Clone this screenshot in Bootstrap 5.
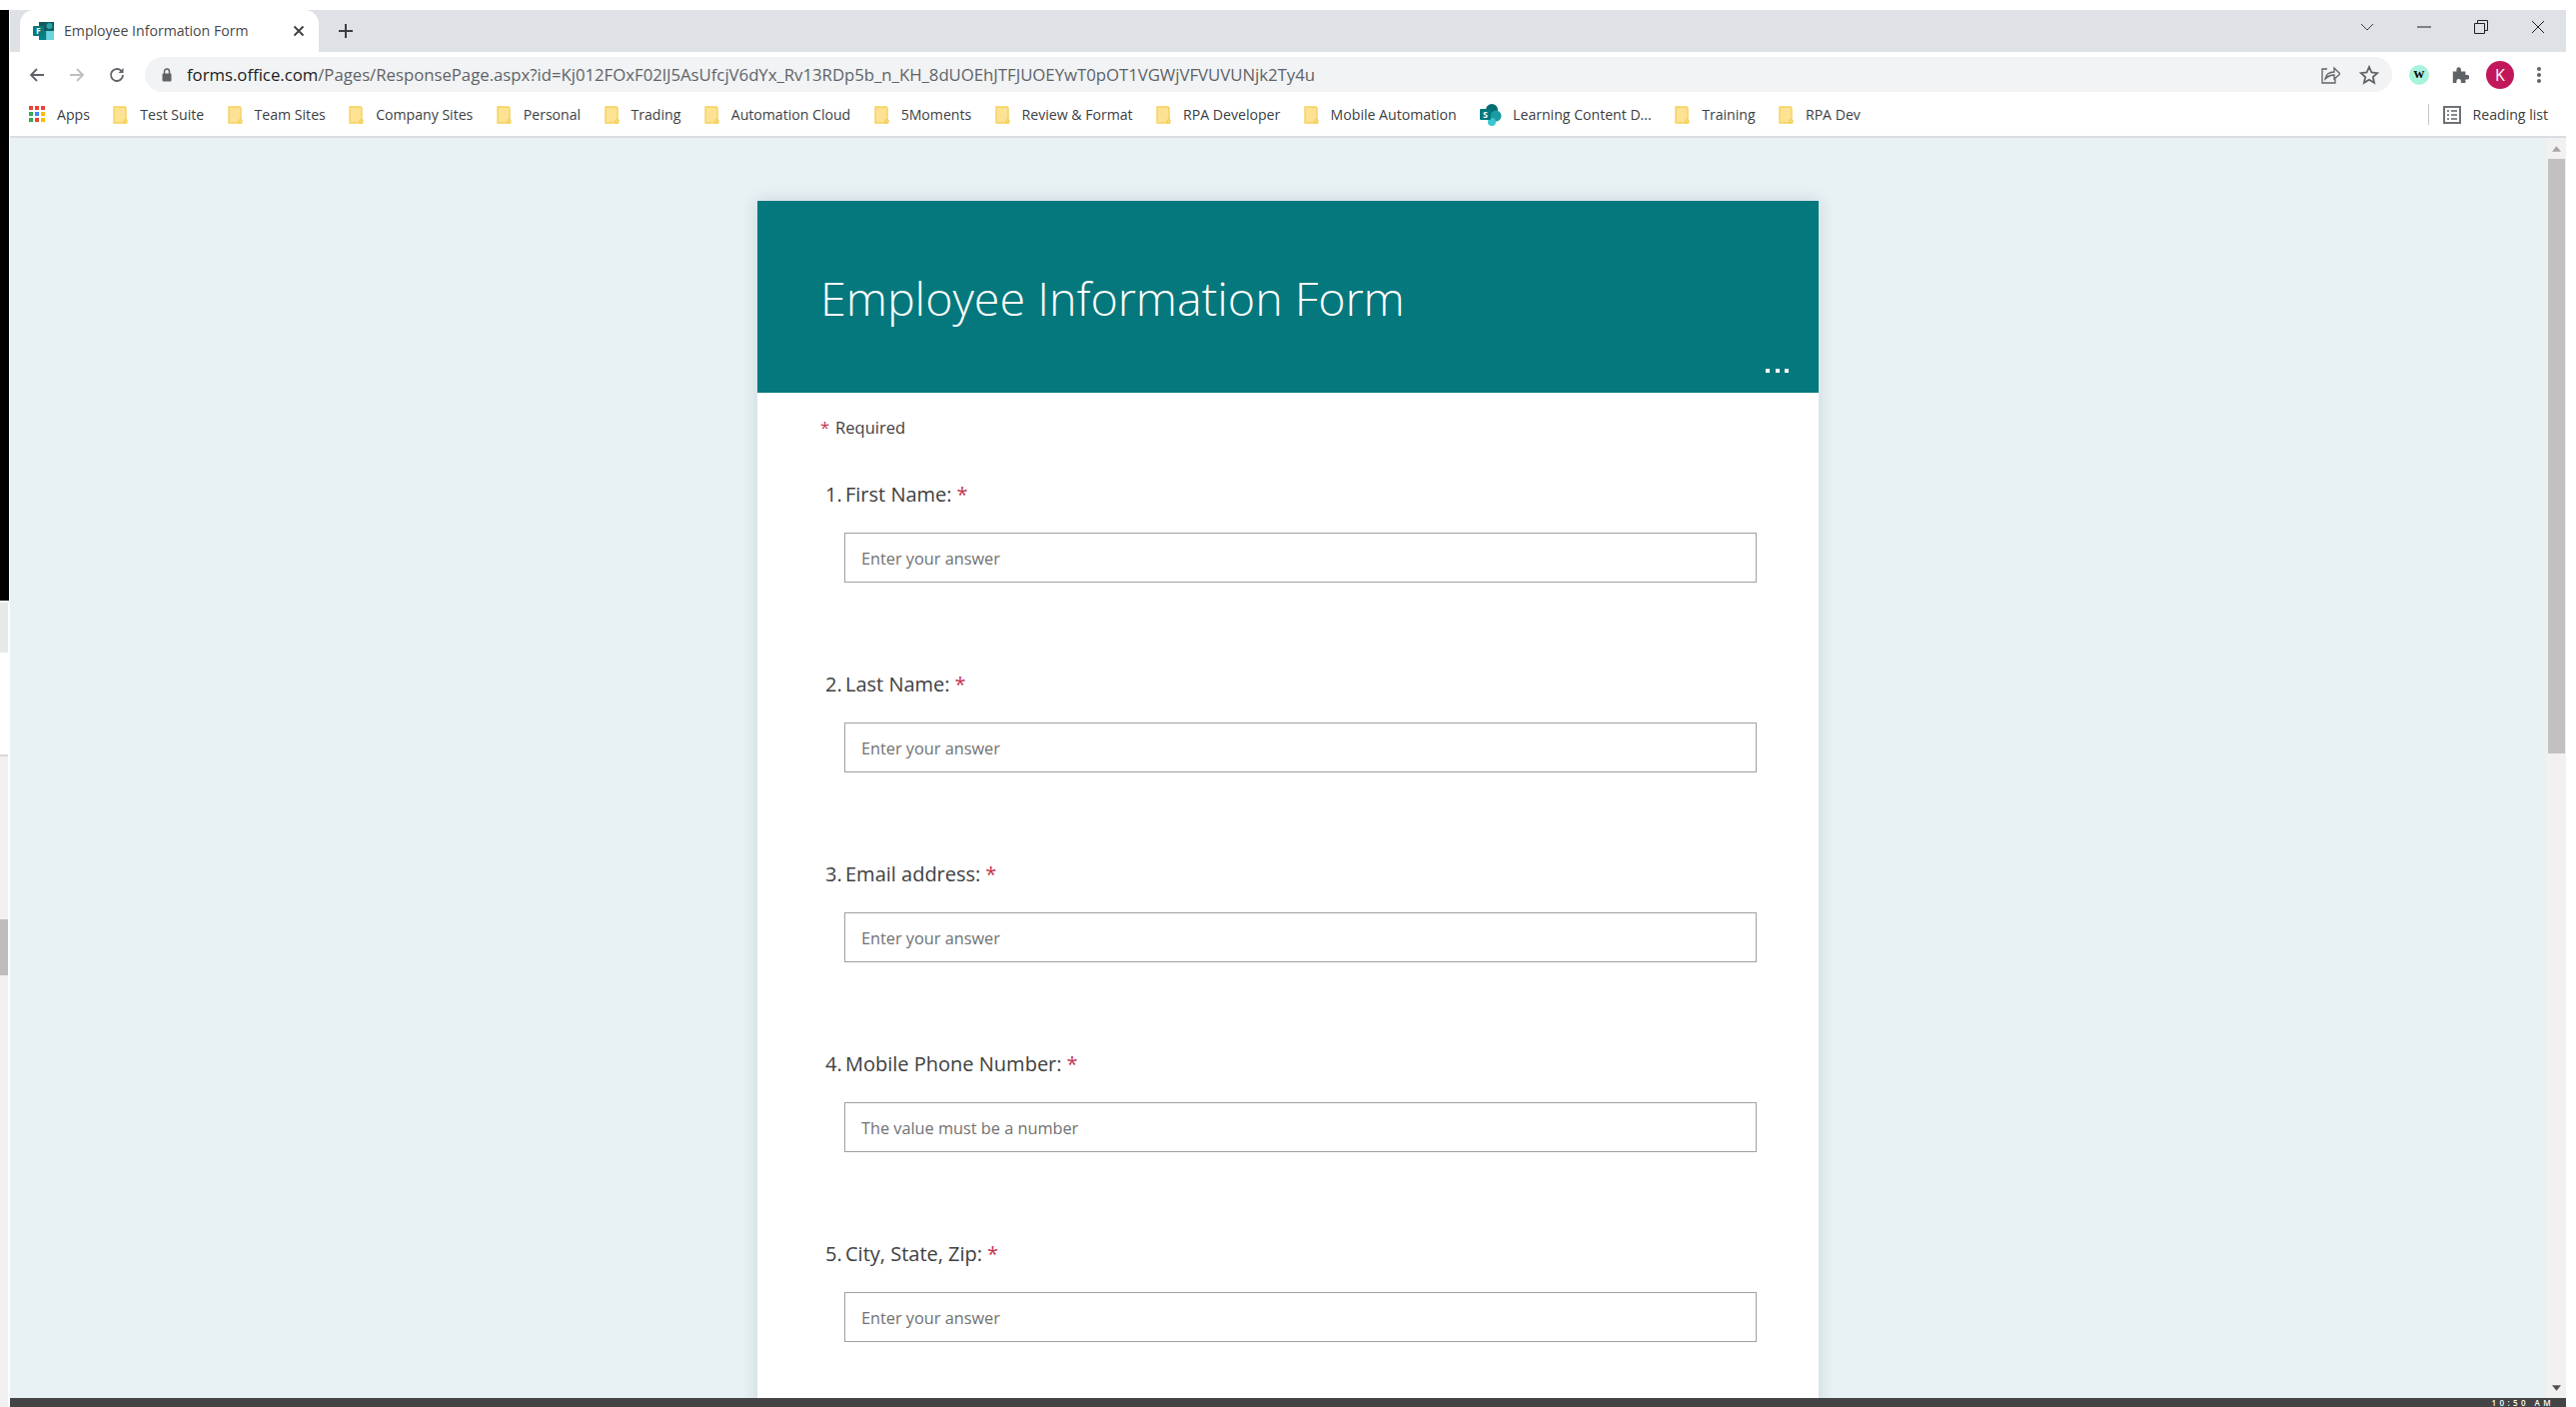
<!DOCTYPE html>
<html lang="en">
<head>
<meta charset="utf-8">
<title>Employee Information Form</title>
<link href="https://cdn.jsdelivr.net/npm/bootstrap@5.3.0/dist/css/bootstrap.min.css" rel="stylesheet">
<style>
html,body{height:100%;overflow:hidden;background:#fff}
body{font-family:"Open Sans","Noto Sans",sans-serif;color:#3c4043}
.shell{height:1408px;width:2578px;overflow:hidden}
.edge-left{width:10px;padding-top:10px;flex:none}
.edge-black{width:9px;height:591px;background:#000;flex:none}
.edge-pale{width:8px;height:50px;margin-top:2px;background:#e6e8ea;flex:none}
.edge-track{width:8px;margin-top:102px;flex:1;background:#f0f0f0;border-top:2px solid #d8d8d8;padding-top:163px}
.edge-thumb{width:8px;height:56px;background:#bdbdbd}
.browser{width:2558px;flex:none;padding-top:10px}
.tabstrip{height:42px;background:#dee1e6;flex:none;padding-left:10px}
.tabitem{width:299px;height:42px;background:#fff;border-radius:14px 14px 0 0;padding-left:13px;padding-bottom:1px;font-size:14.1px;color:#45494d;flex:none}
.tabtitle{margin-left:10px;width:229px;white-space:nowrap;flex:none}
.tabplus{margin-left:19px}
.winctl{margin-left:auto;padding-bottom:8px}
.winbtn{width:57px}
.toolbar{height:40px;flex:none;background:#fff;padding-left:7px}
.navbtn{width:40px;height:35px;flex:none;margin-top:5px}
.omni{width:2249px;height:35px;background:#f1f3f4;border-radius:18px;margin:5px 0 0 8px;padding:0 13px 0 16px;font-size:16.73px;white-space:nowrap;flex:none}
.omni-lock{margin-right:14px;flex:none}
.omni-host{color:#202124}
.omni-path{color:#5f6368}
.omni-end{margin-left:auto;gap:19px}
.tool-r{margin-top:5px;height:35px}
.ext-w{width:20px;height:20px;margin-left:17px;background:#a8f3dc;color:#111;font:700 15px/1 "Liberation Serif",serif;padding-bottom:3px}
.tool-puzzle{margin-left:22px}
.avatar-k{width:28px;height:28px;margin-left:17px;background:#c2185b;color:#fff;font-size:16px}
.tool-dots{margin-left:22px}
.bookbar{height:46px;flex:none;background:#fff;border-bottom:2px solid #dadce0;padding-left:19px;padding-top:2px;font-size:14.1px;white-space:nowrap;color:#3c4043}
.bookitem{margin-right:23.4px}
.bookitem svg{margin-right:12px}
.bookapps svg{margin-right:11px}
.booksp svg{margin-right:11px}
.bookend{margin-left:auto;margin-right:18px}
.bookdiv{width:1px;height:21px;background:#c6c8cb;margin-right:14px}
.readicon{margin-right:12px}
.pagearea{flex:1;min-height:0;background:#e8f1f4;overflow:hidden}
.pagescroll{flex:1;min-width:0;overflow:hidden;padding-top:63px}
.formcard{width:1062px;margin-left:748px;background:#fff;min-height:1300px;box-shadow:0 0 16px rgba(0,60,80,.14)}
.formhead{height:192px;background:#05787d;color:#fff;padding:66px 0 0 63px}
.formtitle{font-size:46.6px;font-weight:300;line-height:62px;margin:0}
.formdots{right:30px;bottom:20px;width:23px}
.dotmark{width:4px;height:4px;background:#fff}
.formbody{padding:23px 62px 0 63px}
.reqline{font-size:16.5px;line-height:24px;color:#404040}
.reqstar{color:#c4314b;margin-right:6px}
.qblock{height:190px}
.qfirst{margin-top:41px}
.qlabel{font-size:20px;line-height:28px;color:#404040;padding-left:5px;margin-bottom:0}
.qnum{width:20px;flex:none}
.qstar{color:#c4314b;margin-left:5px}
.qinput{display:block;width:913px;height:50px;margin:24px 0 0 24px;padding:1px 16px 0;border:1px solid #a0a0a0;border-radius:0;font-size:16.3px;color:#404040;background:#fff;outline:0}
.qinput::placeholder{color:#717171;opacity:1}
.vscroll{width:20px;flex:none;background:#f1f1f1}
.vcap{height:21px}
.vthumb{height:595px;background:#c1c1c1;margin:0 1px 0 2px}
.vbot{margin-top:auto;height:21px}
.bottombar{height:9px;flex:none;background:#444;overflow:hidden;color:#fff;font-size:8px;line-height:9px}
.clock{margin-left:auto;margin-right:12px;font-weight:600;letter-spacing:3.4px;white-space:nowrap}
</style>
</head>
<body>
<div class="shell d-flex">
  <svg width="0" height="0" class="position-absolute"><defs><g id="fold"><path d="M1 1h11l1 1v15H1z" fill="#fde293" stroke="#f5d15e" stroke-width="1.400"/><path d="M11 17v-3h3v3z" fill="#fde293" stroke="#f0c93f"/></g></defs></svg>
  <div class="edge-left d-flex flex-column">
    <div class="edge-black"></div>
    <div class="edge-pale"></div>
    <div class="edge-track"><div class="edge-thumb"></div></div>
  </div>
  <div class="browser d-flex flex-column">
    <div class="tabstrip d-flex align-items-end">
      <div class="tabitem d-flex align-items-center">
        <svg width="21" height="20" viewBox="0 0 21 20"><rect x="6" y="1" width="15" height="9" fill="#0e5c62"/><rect x="6" y="10" width="7.500" height="9" fill="#038387"/><rect x="13.500" y="10" width="7.500" height="9" fill="#37c6d0" opacity=".75"/><circle cx="16.500" cy="5" r="3" fill="#2ba5aa"/><rect y="5" width="11" height="10" rx="1" fill="#077a7e"/><text x="3" y="13" font-size="8.500" font-weight="700" fill="#fff" font-family="Open Sans">F</text></svg>
        <span class="tabtitle">Employee Information Form</span>
        <svg width="12" height="12" viewBox="0 0 12 12"><path d="M1.500 1.500l9 9M10.500 1.500l-9 9" stroke="#3c4043" stroke-width="1.800"/></svg>
      </div>
      <svg class="tabplus align-self-center" width="16" height="16" viewBox="0 0 16 16"><path d="M8 1v14M1 8h14" stroke="#3c4043" stroke-width="2"/></svg>
      <div class="winctl d-flex align-items-center h-100">
        <div class="winbtn d-flex justify-content-center"><svg width="14" height="8" viewBox="0 0 14 8"><path d="M1 1l6 6 6-6" fill="none" stroke="#3c4043"/></svg></div>
        <div class="winbtn d-flex justify-content-center"><svg width="14" height="2" viewBox="0 0 14 2"><path d="M0 1h14" stroke="#202124"/></svg></div>
        <div class="winbtn d-flex justify-content-center"><svg width="14" height="14" viewBox="0 0 14 14"><path d="M.5 3.500h10v10H.5zM3.500 3.500v-3h10v10h-3" fill="none" stroke="#202124"/></svg></div>
        <div class="winbtn d-flex justify-content-center"><svg width="14" height="14" viewBox="0 0 14 14"><path d="M1 1l12 12M13 1L1 13" stroke="#202124"/></svg></div>
      </div>
    </div>
    <div class="toolbar d-flex">
      <div class="navbtn d-flex align-items-center justify-content-center"><svg width="16" height="16" viewBox="0 0 16 16"><path d="M15 8H2M8 2L2 8l6 6" fill="none" stroke="#5f6368" stroke-width="1.800"/></svg></div>
      <div class="navbtn d-flex align-items-center justify-content-center"><svg width="16" height="16" viewBox="0 0 16 16"><path d="M1 8h13M8 2l6 6-6 6" fill="none" stroke="#bcbfc3" stroke-width="1.800"/></svg></div>
      <div class="navbtn d-flex align-items-center justify-content-center"><svg width="16" height="16" viewBox="0 0 16 16"><path d="M14 8a6 6 0 1 1-1.800-4.300" fill="none" stroke="#5f6368" stroke-width="1.800"/><path d="M14.500 1v5h-5z" fill="#5f6368"/></svg></div>
      <div class="omni d-flex align-items-center">
        <svg class="omni-lock" width="12" height="14" viewBox="0 0 12 14"><rect x="1.500" y="5.500" width="9" height="8" rx="1" fill="#5f6368"/><path d="M3.500 6V3.500a2.500 2.500 0 0 1 5 0V6" fill="none" stroke="#5f6368" stroke-width="1.500"/></svg>
        <span><span class="omni-host">forms.office.com</span><span class="omni-path">/Pages/ResponsePage.aspx?id=Kj012FOxF02lJ5AsUfcjV6dYx_Rv13RDp5b_n_KH_8dUOEhJTFJUOEYwT0pOT1VGWjVFVUVUNjk2Ty4u</span></span>
        <div class="omni-end d-flex align-items-center">
          <svg width="20" height="20" viewBox="0 0 20 20"><path d="M7 4H2v14h13v-4" fill="none" stroke="#5f6368" stroke-width="1.300"/><path d="M5 14c1-5 5-7 9-7V3l6 6-6 5v-4c-4 0-6 1-9 4z" fill="none" stroke="#5f6368" stroke-width="1.300"/></svg>
          <svg width="20" height="20" viewBox="0 0 20 20"><path d="M10 2l2.400 5.500 5.800.6-4.400 3.900 1.300 5.800-5.100-3-5.100 3L6.200 12 1.800 8.100l5.800-.6z" fill="none" stroke="#5f6368" stroke-width="1.800"/></svg>
        </div>
      </div>
      <div class="tool-r d-flex align-items-center">
        <div class="ext-w d-flex align-items-center justify-content-center rounded-circle">w</div>
        <svg class="tool-puzzle" width="18" height="18" viewBox="0 0 20 20"><path d="M2 6h4V4a2.500 2.500 0 0 1 5 0v2h5v4h2a2.500 2.500 0 0 1 0 5h-2v4h-5v-2a2.500 2.500 0 0 0-5 0v2H2z" fill="#5f6368"/></svg>
        <div class="avatar-k d-flex align-items-center justify-content-center rounded-circle">K</div>
        <svg class="tool-dots" width="6" height="18" viewBox="0 0 6 18"><circle cx="3" cy="3" r="2" fill="#5f6368"/><circle cx="3" cy="9" r="2" fill="#5f6368"/><circle cx="3" cy="15" r="2" fill="#5f6368"/></svg>
      </div>
    </div>
    <div class="bookbar d-flex align-items-center">
      <div class="bookitem bookapps d-flex align-items-center"><svg width="17" height="17" viewBox="0 0 17 17"><g fill="#ea4335"><rect width="4" height="4"/><rect x="6" width="4" height="4"/><rect x="12" width="4" height="4"/></g><g fill="#fbbc04"><rect y="6" width="4" height="4" fill="#34a853"/><rect x="6" y="6" width="4" height="4" fill="#4285f4"/><rect x="12" y="6" width="4" height="4"/></g><g fill="#34a853"><rect y="12" width="4" height="4"/><rect x="6" y="12" width="4" height="4" fill="#ea4335"/><rect x="12" y="12" width="4" height="4" fill="#fbbc04"/></g></svg>Apps</div>
      <div class="bookitem d-flex align-items-center"><svg width="15" height="18" viewBox="0 0 15 18"><use href="#fold"/></svg>Test Suite</div>
      <div class="bookitem d-flex align-items-center"><svg width="15" height="18" viewBox="0 0 15 18"><use href="#fold"/></svg>Team Sites</div>
      <div class="bookitem d-flex align-items-center"><svg width="15" height="18" viewBox="0 0 15 18"><use href="#fold"/></svg>Company Sites</div>
      <div class="bookitem d-flex align-items-center"><svg width="15" height="18" viewBox="0 0 15 18"><use href="#fold"/></svg>Personal</div>
      <div class="bookitem d-flex align-items-center"><svg width="15" height="18" viewBox="0 0 15 18"><use href="#fold"/></svg>Trading</div>
      <div class="bookitem d-flex align-items-center"><svg width="15" height="18" viewBox="0 0 15 18"><use href="#fold"/></svg>Automation Cloud</div>
      <div class="bookitem d-flex align-items-center"><svg width="15" height="18" viewBox="0 0 15 18"><use href="#fold"/></svg>5Moments</div>
      <div class="bookitem d-flex align-items-center"><svg width="15" height="18" viewBox="0 0 15 18"><use href="#fold"/></svg>Review &amp; Format</div>
      <div class="bookitem d-flex align-items-center"><svg width="15" height="18" viewBox="0 0 15 18"><use href="#fold"/></svg>RPA Developer</div>
      <div class="bookitem d-flex align-items-center"><svg width="15" height="18" viewBox="0 0 15 18"><use href="#fold"/></svg>Mobile Automation</div>
      <div class="bookitem booksp d-flex align-items-center"><svg width="22" height="22" viewBox="0 0 22 22"><circle cx="12" cy="6" r="6" fill="#036c70"/><circle cx="16" cy="12" r="5.500" fill="#1a9ba1"/><circle cx="12" cy="18" r="4" fill="#37c6d0"/><rect y="5" width="11" height="11" rx="1" fill="#03787c"/><text x="3" y="14" font-size="9" font-weight="700" fill="#fff" font-family="Open Sans">S</text></svg>Learning Content D...</div>
      <div class="bookitem d-flex align-items-center"><svg width="15" height="18" viewBox="0 0 15 18"><use href="#fold"/></svg>Training</div>
      <div class="bookitem d-flex align-items-center"><svg width="15" height="18" viewBox="0 0 15 18"><use href="#fold"/></svg>RPA Dev</div>
      <div class="bookend d-flex align-items-center"><div class="bookdiv"></div><svg class="readicon" width="18" height="18" viewBox="0 0 18 18"><rect x="1" y="1" width="16" height="16" fill="none" stroke="#5f6368" stroke-width="1.800"/><path d="M4 5h2M4 9h2M4 13h2M8 5h6M8 9h6M8 13h6" stroke="#5f6368" stroke-width="1.400"/></svg>Reading list</div>
    </div>
    <div class="pagearea d-flex">
      <div class="pagescroll">
        <div class="formcard">
          <div class="formhead position-relative">
            <h1 class="formtitle">Employee Information Form</h1>
            <div class="formdots position-absolute d-flex justify-content-between"><span class="dotmark"></span><span class="dotmark"></span><span class="dotmark"></span></div>
          </div>
          <div class="formbody">
            <div class="reqline"><span class="reqstar">*</span>Required</div>
            <div class="qblock qfirst"><div class="qlabel d-flex"><span class="qnum">1.</span><span>First Name:<span class="qstar">*</span></span></div><input class="qinput" type="text" placeholder="Enter your answer"></div>
            <div class="qblock"><div class="qlabel d-flex"><span class="qnum">2.</span><span>Last Name:<span class="qstar">*</span></span></div><input class="qinput" type="text" placeholder="Enter your answer"></div>
            <div class="qblock"><div class="qlabel d-flex"><span class="qnum">3.</span><span>Email address:<span class="qstar">*</span></span></div><input class="qinput" type="text" placeholder="Enter your answer"></div>
            <div class="qblock"><div class="qlabel d-flex"><span class="qnum">4.</span><span>Mobile Phone Number:<span class="qstar">*</span></span></div><input class="qinput" type="text" placeholder="The value must be a number"></div>
            <div class="qblock"><div class="qlabel d-flex"><span class="qnum">5.</span><span>City, State, Zip:<span class="qstar">*</span></span></div><input class="qinput" type="text" placeholder="Enter your answer"></div>
          </div>
        </div>
      </div>
      <div class="vscroll d-flex flex-column">
        <div class="vcap d-flex align-items-center justify-content-center"><svg width="9" height="6" viewBox="0 0 10 6"><path d="M5 0l5 6H0z" fill="#a3a3a3"/></svg></div>
        <div class="vthumb"></div>
        <div class="vbot d-flex align-items-center justify-content-center"><svg width="9" height="6" viewBox="0 0 10 6"><path d="M5 6L0 0h10z" fill="#505050"/></svg></div>
      </div>
    </div>
    <div class="bottombar d-flex"><span class="clock">10:50 AM</span></div>
  </div>
</div>
<script src="https://cdn.jsdelivr.net/npm/bootstrap@5.3.0/dist/js/bootstrap.bundle.min.js"></script>
</body>
</html>
